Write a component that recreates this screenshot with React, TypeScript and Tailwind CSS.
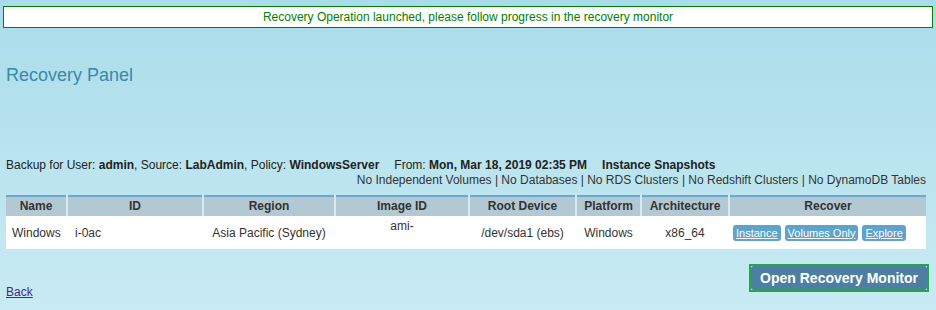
import { useState } from "react";

const rows = [
	{
		name: "Windows",
		id: "i-0ac",
		region: "Asia Pacific (Sydney)",
		image: "ami-",
		root: "/dev/sda1 (ebs)",
		platform: "Windows",
		arch: "x86_64",
	},
];

const cols = [
	{ label: "Name", w: "w-[61px]" },
	{ label: "ID", w: "w-[136px]" },
	{ label: "Region", w: "w-[132px]" },
	{ label: "Image ID", w: "w-[134px]" },
	{ label: "Root Device", w: "w-[107px]" },
	{ label: "Platform", w: "w-[65px]" },
	{ label: "Architecture", w: "w-[88px]" },
	{ label: "Recover", w: "" },
];

function SmallButton({ label }: { label: string }) {
	return (
		<button className="h-[16px] rounded-[3px] bg-[#5da3cb] px-[3px] text-[11px] leading-[16px] text-white underline">
			{label}
		</button>
	);
}

export default function App() {
	const [clicked, setClicked] = useState(false);

	return (
		<div
			className="h-[310px] w-[936px] overflow-hidden bg-gradient-to-b from-[#a9dcea] to-[#c9ebf3] text-[12px] text-[#222]"
			style={{ fontFamily: '"Liberation Sans", Arial, sans-serif' }}
		>
			<div className="px-[3px] pt-[6px]">
				<div className="flex h-[22px] items-center justify-center border border-[#008000] bg-white text-[12px] text-[#008000]">
					Recovery Operation launched, please follow progress in the recovery monitor
				</div>
			</div>

			<h1 className="mt-[36px] pl-[6px] text-[18px] leading-[22px] text-[#3a89a9]">
				Recovery Panel
			</h1>

			<div className="mt-[72px] pl-[6px] pr-[10px]">
				<div className="leading-[15px]">
					Backup for User: <b>admin</b>, Source: <b>LabAdmin</b>, Policy:{" "}
					<b>WindowsServer</b>
					<span className="ml-[15px]">From: </span>
					<b>Mon, Mar 18, 2019 02:35 PM</b>
					<b className="ml-[15px]">Instance Snapshots</b>
				</div>
				<div className="text-right leading-[15px] text-[#333]">
					No Independent Volumes | No Databases | No RDS Clusters | No Redshift Clusters | No
					DynamoDB Tables
				</div>

				<table className="mt-[7px] w-full border-collapse border-t-2 border-[#6aa8cf]">
					<thead>
						<tr className="h-[20px] bg-[#b2c9d4]">
							{cols.map((c) => (
								<th
									key={c.label}
									className={`${c.w} border-l-2 border-[#d8eaf1] p-0 text-center text-[12px] font-bold leading-[15px] text-[#333] first:border-l-0`}
								>
									{c.label}
								</th>
							))}
						</tr>
					</thead>
					<tbody>
						{rows.map((r) => (
							<tr key={r.id} className="h-[33px] bg-white text-[12px] text-[#333]">
								<td className="p-0 pl-[6px] align-middle">{r.name}</td>
								<td className="p-0 pl-[8px] align-middle">{r.id}</td>
								<td className="p-0 text-center align-middle">{r.region}</td>
								<td className="p-0 pb-[13px] text-center align-middle">{r.image}</td>
								<td className="p-0 text-center align-middle">{r.root}</td>
								<td className="p-0 text-center align-middle">{r.platform}</td>
								<td className="p-0 text-center align-middle">{r.arch}</td>
								<td className="p-0 pl-[4px] align-middle">
									<div className="flex gap-[4px]">
										<SmallButton label="Instance" />
										<SmallButton label="Volumes Only" />
										<SmallButton label="Explore" />
									</div>
								</td>
							</tr>
						))}
					</tbody>
				</table>

				<div className="mt-[15px] flex items-start justify-between">
					<a href="#" className="mt-[21px] text-[12px] leading-[15px] text-[#3f2b8c] underline">
						Back
					</a>
					<div className="mr-[-3px] border-2 border-[#22a84a]">
						<button
							onClick={() => setClicked(!clicked)}
							className="rounded-[3px] bg-[#4c7fa1] px-[9px] text-[14px] font-bold leading-[24px] text-white"
						>
							Open Recovery Monitor
						</button>
					</div>
				</div>
			</div>
		</div>
	);
}
